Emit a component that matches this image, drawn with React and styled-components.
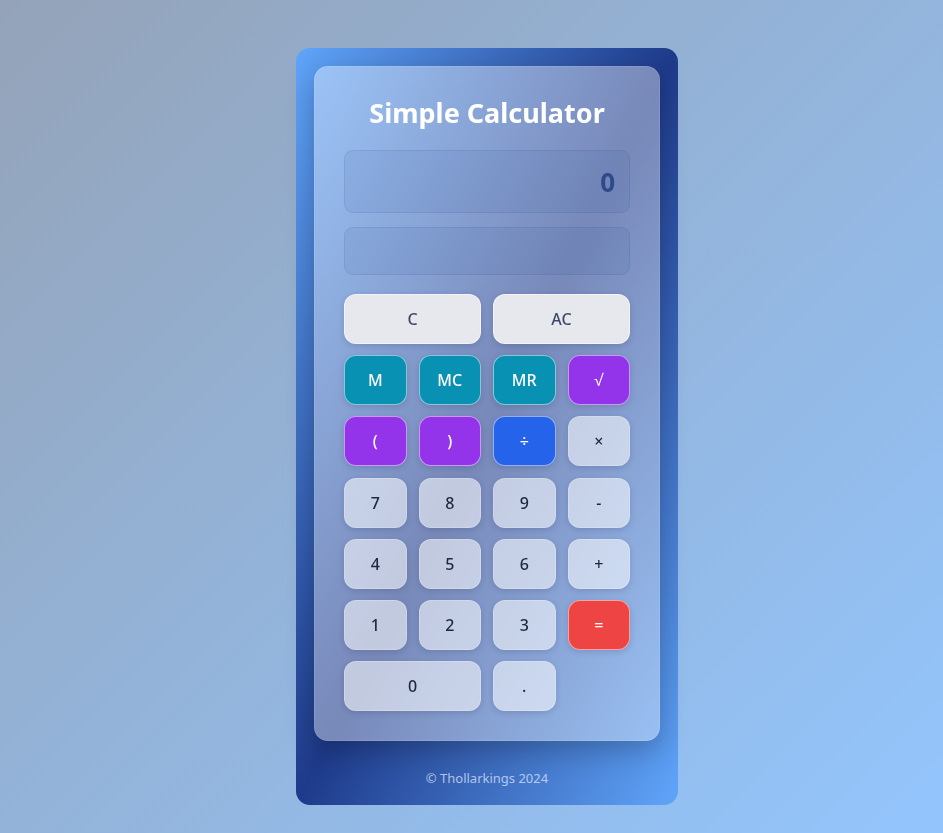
import React, { useState } from "react"
import styled, { createGlobalStyle } from "styled-components"

const GlobalStyle = createGlobalStyle`
  html, body {
    margin: 0;
    padding: 0;
  }
  body {
    font-family: "Noto Sans", "Open Sans", sans-serif;
    background: linear-gradient(135deg, #94a3b8 0%, #93c5fd 100%);
    min-height: 100vh;
  }
`

const Page = styled.div`
  min-height: 100vh;
  box-sizing: border-box;
  display: flex;
  justify-content: center;
  align-items: flex-start;
  padding: 48px 0 0 31px;
`

const Shell = styled.div`
  width: 382px;
  box-sizing: border-box;
  padding: 18px 18px 17px;
  border-radius: 14px;
  background: linear-gradient(to bottom right, #60a5fa, #1e3a8a, #60a5fa);
`

const Glass = styled.div`
  box-sizing: border-box;
  padding: 29px;
  border-radius: 14px;
  background: rgba(255, 255, 255, 0.4);
  border: 1px solid rgba(255, 255, 255, 0.1);
  box-shadow: 0 10px 28px rgba(0, 0, 0, 0.22);
  backdrop-filter: blur(10px);
`

const Title = styled.h1`
  margin: 0 0 20px;
  font-size: 27px;
  line-height: 34px;
  font-weight: 700;
  text-align: center;
  color: #ffffff;
`

const Screen = styled.div`
  box-sizing: border-box;
  height: ${p => p.$height}px;
  margin-bottom: ${p => p.$gap}px;
  padding: 0 14px;
  display: flex;
  align-items: center;
  justify-content: flex-end;
  border-radius: 9px;
  background: rgba(30, 58, 138, 0.08);
  border: 1px solid rgba(30, 58, 138, 0.1);
  font-size: 26px;
  font-weight: 700;
  color: #2c4a8c;
`

const Keys = styled.div`
  display: grid;
  grid-template-columns: repeat(4, 1fr);
  grid-auto-rows: 50px;
  column-gap: 12px;
  row-gap: 11.2px;
`

const tones = {
  clear: { bg: "#e7e8ee", fg: "#3f4a6b" },
  memory: { bg: "#0891b2", fg: "#ffffff" },
  purple: { bg: "#9333ea", fg: "#ffffff" },
  divide: { bg: "#2563eb", fg: "#ffffff" },
  equals: { bg: "#ef4444", fg: "#ffffff" },
  plain: { bg: "rgba(255, 255, 255, 0.55)", fg: "#1e293b" },
}

const Key = styled.button`
  grid-column: span ${p => p.$span || 1};
  border-radius: 12px;
  border: 1px solid ${p => (p.$tone === "plain" ? "rgba(255,255,255,0.2)" : "rgba(255,255,255,0.5)")};
  background: ${p => tones[p.$tone].bg};
  color: ${p => tones[p.$tone].fg};
  font-family: "Noto Sans", "Open Sans", sans-serif;
  font-size: 16px;
  font-weight: 500;
  box-shadow: 0 2px 6px rgba(30, 41, 80, 0.18);
  cursor: pointer;
  padding: 0;
`

const Footer = styled.p`
  margin: 27px 0 0;
  text-align: center;
  font-size: 13px;
  line-height: 20px;
  color: rgba(224, 236, 255, 0.72);
`

const keys = [
  { label: "C", tone: "clear", span: 2 },
  { label: "AC", tone: "clear", span: 2 },
  { label: "M", tone: "memory" },
  { label: "MC", tone: "memory" },
  { label: "MR", tone: "memory" },
  { label: "√", tone: "purple" },
  { label: "(", tone: "purple" },
  { label: ")", tone: "purple" },
  { label: "÷", tone: "divide" },
  { label: "×", tone: "plain" },
  { label: "7", tone: "plain" },
  { label: "8", tone: "plain" },
  { label: "9", tone: "plain" },
  { label: "-", tone: "plain" },
  { label: "4", tone: "plain" },
  { label: "5", tone: "plain" },
  { label: "6", tone: "plain" },
  { label: "+", tone: "plain" },
  { label: "1", tone: "plain" },
  { label: "2", tone: "plain" },
  { label: "3", tone: "plain" },
  { label: "=", tone: "equals" },
  { label: "0", tone: "plain", span: 2 },
  { label: ".", tone: "plain" },
]

const App = () => {
  const [value] = useState("0")
  return (
    <>
      <GlobalStyle />
      <Page>
        <Shell>
          <Glass>
            <Title>Simple Calculator</Title>
            <Screen $height={63} $gap={14}>{value}</Screen>
            <Screen $height={48} $gap={19} />
            <Keys>
              {keys.map(k => (
                <Key key={k.label} $tone={k.tone} $span={k.span}>
                  {k.label}
                </Key>
              ))}
            </Keys>
          </Glass>
          <Footer>© Thollarkings 2024</Footer>
        </Shell>
      </Page>
    </>
  )
}

export default App
